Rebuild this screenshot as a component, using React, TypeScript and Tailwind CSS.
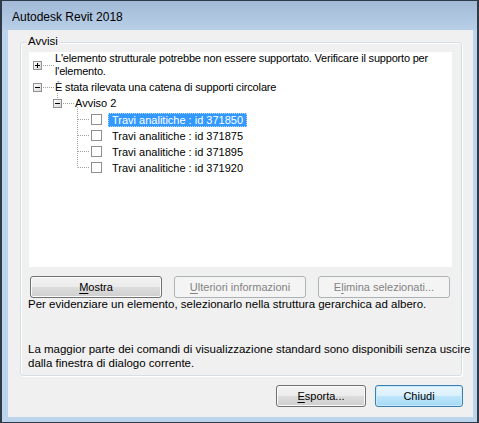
import React from "react";

const btnNormal =
  "h-[22px] rounded-[3px] border border-[#707070] bg-[linear-gradient(#f2f2f2_0%,#ebebeb_50%,#dddddd_50%,#cfcfcf_100%)] shadow-[inset_0_0_0_1px_#fbfbfb] flex items-center justify-center text-black";
const btnDisabled =
  "h-[22px] rounded-[3px] border border-[#adb2b5] bg-[#f4f4f4] flex items-center justify-center text-[#838383]";
const btnDefault =
  "h-[22px] rounded-[3px] border border-[#3c7fb1] bg-[linear-gradient(#eaf6fd_0%,#d9f0fc_50%,#bee6fd_50%,#a7d9f5_100%)] shadow-[inset_0_0_0_1px_#c8ebfb] flex items-center justify-center text-black";

const DOT = "#a0a0a0";

function Expander({ x, y, open }: { x: number; y: number; open: boolean }) {
  return (
    <g>
      <defs>
        <linearGradient id="exg" x1="0" y1="0" x2="1" y2="1">
          <stop offset="0" stopColor="#ffffff" />
          <stop offset="1" stopColor="#d6d6d6" />
        </linearGradient>
      </defs>
      <rect x={x + 0.5} y={y + 0.5} width={8} height={8} fill="url(#exg)" stroke="#919191" />
      <line x1={x + 2} y1={y + 4.5} x2={x + 7} y2={y + 4.5} stroke="#000" />
      {!open && <line x1={x + 4.5} y1={y + 2} x2={x + 4.5} y2={y + 7} stroke="#000" />}
    </g>
  );
}

function Checkbox({ x, y }: { x: number; y: number }) {
  return (
    <rect x={x + 0.5} y={y + 0.5} width={10} height={10} fill="#fff" stroke="#8e8f8f" />
  );
}

function LeafRow({ text, selected, last }: { text: string; selected?: boolean; last?: boolean }) {
  return (
    <div className="relative h-[16px] flex">
      <svg width={79} height={16} className="shrink-0 overflow-visible">
        <line
          x1={48.5}
          y1={-4}
          x2={48.5}
          y2={last ? 8.5 : 16}
          stroke={DOT}
          strokeDasharray="1 1"
        />
        <line x1={49} y1={8.5} x2={61} y2={8.5} stroke={DOT} strokeDasharray="1 1" />
        <Checkbox x={62} y={3} />
      </svg>
      <div
        className={
          "mt-[2px] h-[14px] px-[3px] leading-[12px] border whitespace-nowrap " +
          (selected
            ? "bg-[#3399ff] text-white border-dotted border-[#b3d7ff]"
            : "border-transparent text-black")
        }
      >
        {text}
      </div>
    </div>
  );
}

export default function App() {
  return (
    <div className="w-[479px] h-[423px] bg-[#2e3a47] pt-px pb-px pl-[2px] pr-[2px] font-['Liberation_Sans',Arial,sans-serif] text-[11px] text-black">
      <div className="h-full flex flex-col bg-[#bcd4ec]">
        <div className="h-[29px] shrink-0 bg-[linear-gradient(#a2bad6,#b8cfe8)] pl-[10px] pt-[5px] text-[12px] leading-[22px] text-black">
          Autodesk Revit 2018
        </div>
        <div className="ml-[6px] mr-[4px] h-[387px] bg-[#f0f0f0] flex flex-col">
          <div className="mt-[12px] ml-[12px] mr-[11px] h-[334px] relative rounded-[3px] border border-[#d5dfe5] shadow-[inset_1px_1px_0_#ffffff,1px_1px_0_#ffffff] flex flex-col pl-[8px] pr-[9px]">
            <div className="absolute left-[5px] top-[-8px] px-[2px] bg-[#f0f0f0] leading-[13px] text-[11.5px]">
              Avvisi
            </div>
            <div className="mt-[9px] h-[215px] bg-white flex flex-col">
              <div className="h-[27px] flex">
                <svg width={26} height={27} className="shrink-0">
                  <Expander x={4} y={9} open={false} />
                  <line x1={14} y1={13.5} x2={25} y2={13.5} stroke={DOT} strokeDasharray="1 1" />
                </svg>
                <div className="leading-[13px] whitespace-nowrap tracking-[-0.2px]">
                  L'elemento strutturale potrebbe non essere supportato. Verificare il supporto per
                  <br />
                  l'elemento.
                </div>
              </div>
              <div className="h-[16px] flex">
                <svg width={26} height={16} className="shrink-0">
                  <Expander x={4} y={4} open={true} />
                  <line x1={14} y1={8.5} x2={25} y2={8.5} stroke={DOT} strokeDasharray="1 1" />
                </svg>
                <div className="leading-[16px] whitespace-nowrap tracking-[-0.15px]">
                  È stata rilevata una catena di supporti circolare
                </div>
              </div>
              <div className="h-[16px] flex">
                <svg width={46} height={16} className="shrink-0 overflow-visible">
                  <line x1={28.5} y1={-2} x2={28.5} y2={4} stroke={DOT} strokeDasharray="1 1" />
                  <Expander x={24} y={4} open={true} />
                  <line x1={34} y1={8.5} x2={45} y2={8.5} stroke={DOT} strokeDasharray="1 1" />
                </svg>
                <div className="leading-[16px] whitespace-nowrap">Avviso 2</div>
              </div>
              <LeafRow text="Travi analitiche : id 371850" selected />
              <LeafRow text="Travi analitiche : id 371875" />
              <LeafRow text="Travi analitiche : id 371895" />
              <LeafRow text="Travi analitiche : id 371920" last />
            </div>
            <div className="mt-[9px] ml-[1px] flex gap-[12px]">
              <div className={btnNormal + " w-[132px]"}>
                <span>
                  <span className="underline underline-offset-[2px]">M</span>ostra
                </span>
              </div>
              <div className={btnDisabled + " w-[132px]"}>
                <span>
                  <span className="underline underline-offset-[2px]">U</span>lteriori informazioni
                </span>
              </div>
              <div className={btnDisabled + " w-[132px]"}>
                <span>
                  E<span className="underline underline-offset-[2px]">l</span>imina selezionati...
                </span>
              </div>
            </div>
            <div className="ml-[-1px] leading-[13px] whitespace-nowrap text-[11.5px]">
              Per evidenziare un elemento, selezionarlo nella struttura gerarchica ad albero.
            </div>
            <div className="ml-[-1px] mt-[31px] leading-[14px] whitespace-nowrap text-[11.5px]">
              La maggior parte dei comandi di visualizzazione standard sono disponibili senza uscire
              <br />
              dalla finestra di dialogo corrente.
            </div>
          </div>
          <div className="mt-[9px] pr-[10px] flex justify-end gap-[9px]">
            <div className={btnNormal + " w-[90px]"}>
              <span>
                <span className="underline underline-offset-[2px]">E</span>sporta...
              </span>
            </div>
            <div className={btnDefault + " w-[88px]"}>Chiudi</div>
          </div>
        </div>
      </div>
    </div>
  );
}
